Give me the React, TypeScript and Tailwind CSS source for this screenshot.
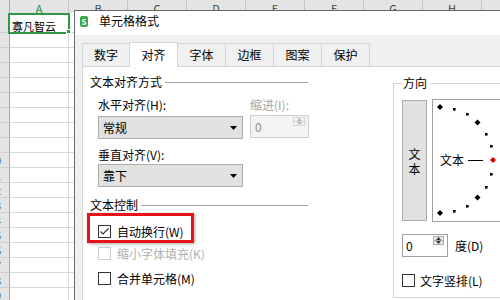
import React from "react";

const FONT = "font-['Noto_Sans_CJK_SC','Noto_Sans',sans-serif]";

const COLS = ["A", "B", "C", "D", "E", "F", "G", "H", "I"];
const ROWS = Array.from({ length: 19 }, (_, i) => i + 1);

function Arrow() {
  return (
    <svg width="7" height="4" viewBox="0 0 7 4">
      <path d="M0 0H7L3.5 4Z" fill="#000" />
    </svg>
  );
}

function Dropdown({ value }: { value: string }) {
  return (
    <div className="flex h-[23px] w-[145px] items-center justify-between border border-[#adadad] bg-[#e1e1e1] pl-[4px] pr-[5px]">
      <span className="text-[12px] leading-[12px] text-black">{value}</span>
      <Arrow />
    </div>
  );
}

function SpinButtons({ disabled }: { disabled?: boolean }) {
  const c = disabled ? "#b5b5b5" : "#333";
  const box = disabled
    ? "flex flex-1 items-center justify-center border border-[#d6d6d6] bg-[#f3f3f3]"
    : "flex flex-1 items-center justify-center border border-[#acacac] bg-[#e8e8e8]";
  return (
    <div className="flex flex-col">
      <div className={box}>
        <svg width="5" height="3" viewBox="0 0 5 3">
          <path d="M0 3H5L2.5 0Z" fill={c} />
        </svg>
      </div>
      <div className={box + " -mt-px"}>
        <svg width="5" height="3" viewBox="0 0 5 3">
          <path d="M0 0H5L2.5 3Z" fill={c} />
        </svg>
      </div>
    </div>
  );
}

function CheckBox({ checked, disabled }: { checked?: boolean; disabled?: boolean }) {
  return (
    <div
      className={
        disabled
          ? "flex h-[13px] w-[13px] shrink-0 items-center justify-center border border-[#cccccc] bg-white"
          : "flex h-[13px] w-[13px] shrink-0 items-center justify-center border border-[#333333] bg-white"
      }
    >
      {checked && (
        <svg width="11" height="11" viewBox="0 0 11 11">
          <path d="M1.5 5.5L4 8L9.5 2.5" fill="none" stroke="#333" strokeWidth="1.2" />
        </svg>
      )}
    </div>
  );
}

function GroupLabel({ text }: { text: string }) {
  return (
    <div className="flex h-[12px] items-center">
      <span className="text-[12px] leading-[12px] text-black">{text}</span>
      <div className="ml-[3px] h-px flex-1 bg-[#a0a0a0]" />
    </div>
  );
}

function Dial() {
  const cx = 7;
  const cy = 60;
  const r = 53;
  const diamonds = [90, 45, 0, -45, -90];
  const squares = [75, 60, 30, 15, -15, -30, -60, -75];
  return (
    <div className="relative ml-[5px] h-[123px] w-[80px] border border-[#a0a0a0] bg-white">
      <svg className="absolute left-0 top-0" width="78" height="121" viewBox="0 0 78 121">
        {squares.map((a) => {
          const x = cx + r * Math.cos((a * Math.PI) / 180);
          const y = cy - r * Math.sin((a * Math.PI) / 180);
          return <rect key={a} x={Math.round(x) - 1} y={Math.round(y) - 1} width="2.6" height="2.6" fill="#000" />;
        })}
        {diamonds.map((a) => {
          const x = cx + r * Math.cos((a * Math.PI) / 180);
          const y = cy - r * Math.sin((a * Math.PI) / 180);
          return (
            <path
              key={a}
              d={`M${x} ${y - 3}L${x + 3} ${y}L${x} ${y + 3}L${x - 3} ${y}Z`}
              fill={a === 0 ? "#e00000" : "#000"}
            />
          );
        })}
        <line x1="35" y1="60.5" x2="50" y2="60.5" stroke="#000" strokeWidth="1" />
      </svg>
      <span className="absolute left-[7px] top-[54px] text-[12px] leading-[12px] text-black">文本</span>
    </div>
  );
}

export default function App() {
  return (
    <div className={`relative h-[300px] w-[500px] overflow-hidden bg-white ${FONT}`}>
      {/* Spreadsheet */}
      <div className="flex flex-col">
        <div className="flex h-[13px] bg-[#e4e4e4]">
          <div className="h-full w-[10px] shrink-0 border-r border-[#a8a8a8]" />
          {COLS.map((c, i) => (
            <div
              key={c}
              className={
                i === 0
                  ? "h-full w-[59px] shrink-0 border-r border-[#c4c4c4] pt-[3px] text-center text-[11px] leading-[11px] text-[#2b8a3e]"
                  : "h-full w-[59px] shrink-0 border-r border-[#c4c4c4] pt-[3px] text-center text-[11px] leading-[11px] text-[#444]"
              }
            >
              {c}
            </div>
          ))}
        </div>
        {ROWS.map((n) => (
          <div key={n} className={n === 1 ? "flex h-[20px]" : "flex h-[15px]"}>
            <div className="h-full w-[10px] shrink-0 overflow-hidden border-b border-r border-b-[#d0d0d0] border-r-[#a8a8a8] bg-[#e4e4e4]">
              <div className="-ml-[20px] w-[30px] text-center text-[11px] leading-[14px] text-[#444]">{n}</div>
            </div>
            {COLS.map((c, i) => (
              <div
                key={c}
                className="flex h-full w-[59px] shrink-0 items-end border-b border-r border-[#d9d9d9] pl-[2px]"
              >
                {n === 1 && i === 0 && (
                  <span className="text-[11px] leading-[12px] text-black">寡凡智云</span>
                )}
              </div>
            ))}
          </div>
        ))}
      </div>

      {/* Selection */}
      <div className="absolute left-[8px] top-[13px] h-[21px] w-[62px] border-2 border-[#2e9a45]" />
      <div className="absolute left-[66px] top-[29px] h-[5px] w-[5px] border border-white bg-[#2e9a45]" />

      {/* Dialog */}
      <div className="absolute left-[74px] top-[10px] flex h-[295px] w-[440px] flex-col border-l border-t border-[#6a6a6a] bg-[#f0f0f0]">
        <div className="flex h-[24px] shrink-0 items-start gap-[11px] bg-white pl-[5px]">
          <div className="mt-[5px] flex h-[11px] w-[8px] items-center justify-center rounded-[2px] bg-[#3aa64a] text-[8px] font-bold leading-[8px] text-white">
            S
          </div>
          <span className="mt-[4px] text-[12px] leading-[12px] text-black">单元格格式</span>
        </div>

        <div className="flex flex-1 flex-col pl-[7px]">
          <div className="mt-[7px] flex h-[24px] items-end">
            {["数字", "对齐", "字体", "边框", "图案", "保护"].map((t, i) =>
              i === 1 ? (
                <div
                  key={t}
                  className="relative z-10 -mb-px -ml-px flex h-[25px] w-[49px] items-center justify-center border-x border-t border-[#d4d4d4] bg-white text-[12px] leading-[12px] text-black"
                >
                  {t}
                </div>
              ) : (
                <div
                  key={t}
                  className={
                    i === 0
                      ? "flex h-[23px] w-[48px] items-center justify-center border-x border-t border-[#d4d4d4] bg-[#f0f0f0] text-[12px] leading-[12px] text-black"
                      : "-ml-px flex h-[23px] w-[49px] items-center justify-center border-x border-t border-[#d4d4d4] bg-[#f0f0f0] text-[12px] leading-[12px] text-black"
                  }
                >
                  {t}
                </div>
              )
            )}
          </div>

          <div className="flex flex-1 border-l border-t border-[#d4d4d4] bg-white pt-[9px] text-[12px] leading-[12px]">
            {/* Left column */}
            <div className="flex w-[225px] shrink-0 flex-col pl-[7px]">
              <GroupLabel text="文本对齐方式" />
              <div className="mt-[11px] flex pl-[8px]">
                <div className="flex flex-col">
                  <span className="text-black">水平对齐(H):</span>
                  <div className="mt-[5px]">
                    <Dropdown value="常规" />
                  </div>
                  <span className="mt-[10px] text-black">垂直对齐(V):</span>
                  <div className="mt-[3px]">
                    <Dropdown value="靠下" />
                  </div>
                </div>
                <div className="ml-[7px] flex flex-col">
                  <span className="text-[#a6a6a6]">缩进(I):</span>
                  <div className="mt-[4px] flex h-[23px] w-[59px] items-stretch justify-between border border-[#cfcfcf] bg-[#f3f3f3] py-[1px] pr-[3px]">
                    <span className="self-center pl-[4px] text-[#8c8c8c]">0</span>
                    <div className="flex w-[12px] flex-col">
                      <SpinButtons disabled />
                    </div>
                  </div>
                </div>
              </div>

              <div className="mt-[12px]">
                <GroupLabel text="文本控制" />
              </div>

              <div className="mt-[14px] flex h-[13px] items-center gap-[6px] pl-[8px]">
                <CheckBox checked />
                <span className="text-black">自动换行(W)</span>
              </div>
              <div className="mt-[9px] flex h-[13px] items-center gap-[6px] pl-[8px]">
                <CheckBox disabled />
                <span className="text-[#b0b0b0]">缩小字体填充(K)</span>
              </div>
              <div className="mt-[12px] flex h-[13px] items-center gap-[6px] pl-[8px]">
                <CheckBox />
                <span className="text-black">合并单元格(M)</span>
              </div>
            </div>

            {/* Right group */}
            <div className="ml-[85px] mt-[1px] flex w-[130px] shrink-0 flex-col self-start">
              <div className="flex h-[12px] items-center">
                <div className="h-[6px] w-[9px] self-end border-l border-t border-[#d4d4d4]" />
                <span className="px-[1px] text-black">方向</span>
                <div className="ml-[2px] h-px flex-1 bg-[#d4d4d4]" />
              </div>
              <div className="flex flex-col border-b border-l border-[#d4d4d4] pb-[10px] pl-[8px] pt-[10px]">
                <div className="flex items-start">
                  <div className="mt-[1px] flex h-[121px] w-[25px] flex-col items-center justify-center border border-[#adadad] bg-[#e1e1e1] text-[12px] leading-[15px] text-black">
                    <span>文</span>
                    <span>本</span>
                  </div>
                  <Dial />
                </div>
                <div className="mt-[12px] flex items-center">
                  <div className="flex h-[23px] w-[46px] items-stretch justify-between border border-[#a0a0a0] bg-white py-[1px] pr-[3px]">
                    <span className="self-center pl-[3px] text-black">0</span>
                    <div className="flex w-[11px] flex-col">
                      <SpinButtons />
                    </div>
                  </div>
                  <span className="ml-[7px] text-black">度(D)</span>
                </div>
                <div className="mt-[17px] flex h-[13px] items-center gap-[5px]">
                  <CheckBox />
                  <span className="text-black">文字竖排(L)</span>
                </div>
              </div>
            </div>
          </div>
        </div>
      </div>

      {/* Red highlight annotation */}
      <div className="absolute left-[87px] top-[213px] h-[30px] w-[107px] border-[3px] border-[#e8121b] shadow-[1px_1px_3px_rgba(0,0,0,0.35)]" />
    </div>
  );
}
